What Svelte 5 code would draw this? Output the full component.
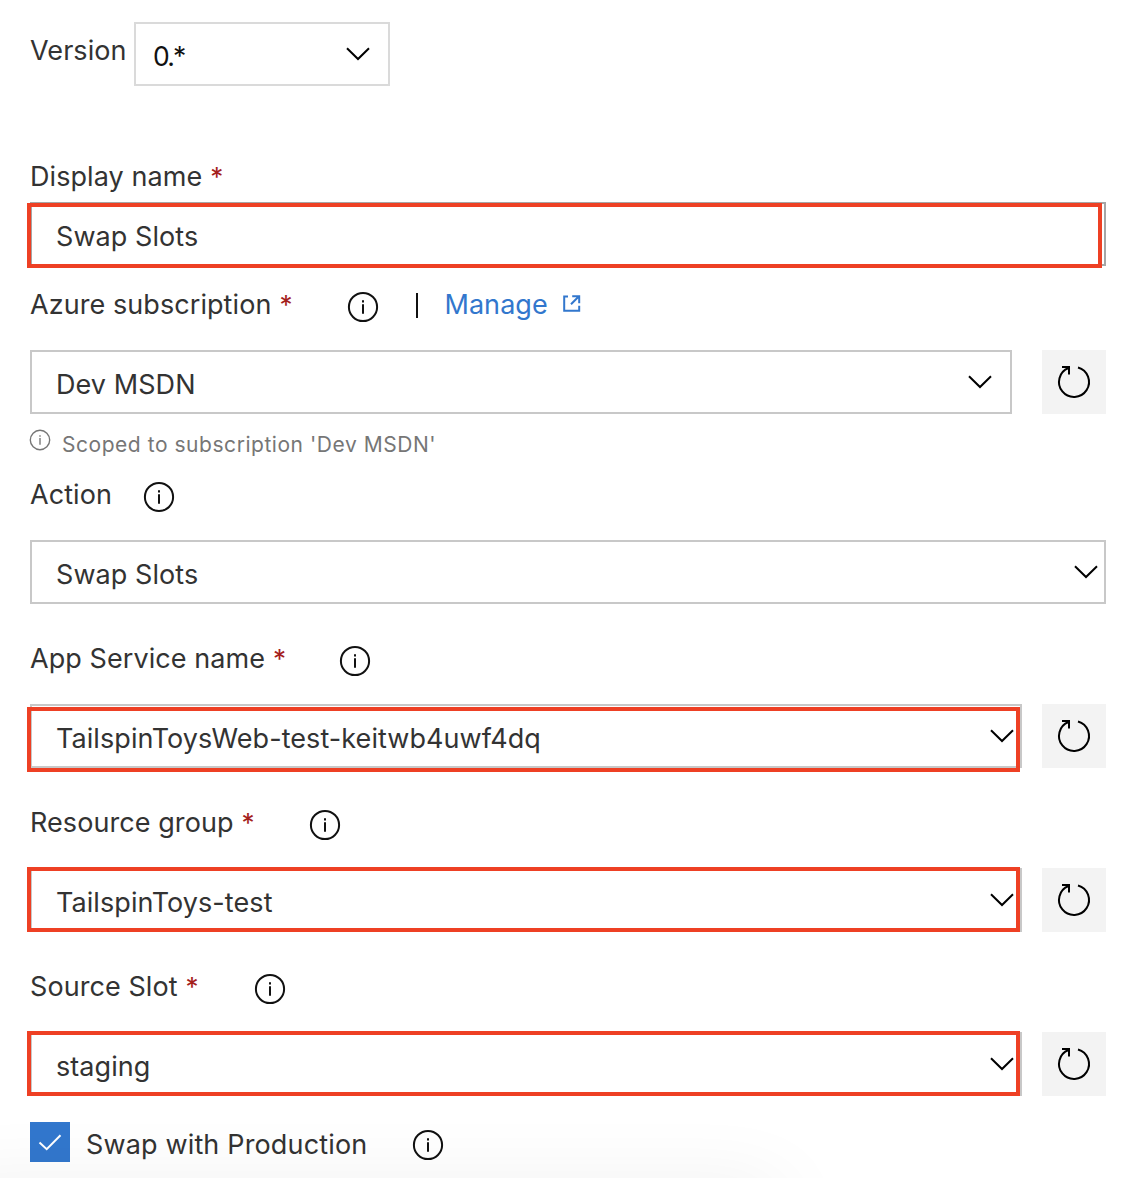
<script>
  const version = '0.*';
  const fields = [
    { id: 'name', label: 'Display name', value: 'Swap Slots', required: true, kind: 'text', mark: true },
    { id: 'subscription', label: 'Azure subscription', value: 'Dev MSDN', required: true, info: true, manage: true, refresh: true, hint: "Scoped to subscription 'Dev MSDN'", kind: 'select' },
    { id: 'action', label: 'Action', value: 'Swap Slots', info: true, kind: 'select' },
    { id: 'app', label: 'App Service name', value: 'TailspinToysWeb-test-keitwb4uwf4dq', required: true, info: true, refresh: true, kind: 'select', mark: true },
    { id: 'group', label: 'Resource group', value: 'TailspinToys-test', required: true, info: true, refresh: true, kind: 'select', mark: true },
    { id: 'slot', label: 'Source Slot', value: 'staging', required: true, info: true, refresh: true, kind: 'select', mark: true },
  ];
</script>

{#snippet info()}
  <svg class="info" viewBox="0 0 32 32" aria-hidden="true">
    <circle cx="16" cy="16" r="14.1" />
    <path d="M16 13.2V22.8M16 9.2v2.2" />
  </svg>
{/snippet}

{#snippet chevron()}
  <svg class="chevron" viewBox="0 0 24 14" aria-hidden="true"><path d="M1 1.2 12 12 23 1.2" /></svg>
{/snippet}

<main>
  <div class="version">
    <span class="version-label">Version</span>
    <div class="box version-box"><span>{version}</span>{@render chevron()}</div>
  </div>

  {#each fields as f (f.id)}
    <section class={f.id}>
      <div class="label">
        <span class="text">{f.label}</span>
        {#if f.required}<span class="star">*</span>{/if}
        {#if f.info}{@render info()}{/if}
        {#if f.manage}
          <i class="pipe"></i>
          <span class="link">Manage</span>
          <svg class="external" viewBox="0 0 18 18" aria-hidden="true">
            <path d="M5 1.6H1.2V15.8H16.2V10.8M8 9.2 15.7 1.5M9.2 1.2H16.2V8.2" />
          </svg>
        {/if}
      </div>
      <div class="row">
        <div class="box">
          <span class="value">{f.value}</span>
          {#if f.kind === 'select'}{@render chevron()}{/if}
          {#if f.mark}<i class="mark"></i>{/if}
        </div>
        {#if f.refresh}
          <div class="refresh">
            <svg viewBox="0 0 64 64" aria-hidden="true">
              <path d="M36 17.5A15 15 0 1 1 26.5 18" />
              <path d="M20 17H27V24.4" />
            </svg>
          </div>
        {/if}
      </div>
      {#if f.hint}
        <div class="hint">{@render info()}<span>{f.hint}</span></div>
      {/if}
    </section>
  {/each}

  <div class="production">
    <span class="check"><svg viewBox="0 0 40 40" aria-hidden="true"><path d="M9.5 20.5 16.7 27.2 30.5 13.2" /></svg></span>
    <span class="text">Swap with Production</span>
    {@render info()}
  </div>
  <i class="shade"></i>
</main>

<style>
  :global(body) { background: #fff; }
  main {
    position: relative;
    box-sizing: border-box;
    width: 1142px;
    height: 1178px;
    padding: 22px 36px 0 30px;
    overflow: hidden;
    font-family: Inter, "Liberation Sans", sans-serif;
    font-size: 27px;
    line-height: 34px;
    letter-spacing: .07px;
    color: #333;
    white-space: nowrap;
  }
  svg { display: block; flex: none; fill: none; stroke: #111; stroke-width: 2; }
  .version { display: flex; height: 64px; margin-bottom: 74px; }
  .version-label { width: 104px; padding-top: 12px; }
  .box {
    position: relative;
    box-sizing: border-box;
    display: flex;
    flex: 1;
    justify-content: space-between;
    height: 64px;
    padding: 16px 6px 0 24px;
    border: 2px solid #c8c8c8;
    background: #fff;
  }
  .version-box { flex: none; width: 256px; padding: 16px 18px 0 17px; border-color: #dadada; color: #111; font-size: 26.5px; line-height: 32px; letter-spacing: -1.8px; }
  .chevron { width: 24px; height: 14px; margin-top: 7px; stroke: #000; }
  .label { display: flex; height: 32px; margin-bottom: 30px; }
  .row { display: flex; gap: 20px; margin-bottom: 38px; }
  .star { width: 14px; margin-left: 8px; color: #a4201b; font-size: 26px; }
  .info { width: 32px; height: 32px; margin-top: 3px; }
  .label .star + .info { margin-left: 54px; }
  .app .label .star + .info { margin-left: 52.2px; }
  .group .label .star + .info { margin-left: 53.7px; }
  .name .label { margin-bottom: 10px; }
  .name .row { margin-bottom: 22px; }
  .name .box { border-color: #a6a6a6; }
  .subscription .row { gap: 30px; margin-bottom: 14px; }
  .subscription .box { padding-right: 18px; }
  .action .info { margin-left: 31px; }
  .mark { position: absolute; inset: 1px 0 -6px -5px; border: 4px solid #ee4024; }
  .name .mark { inset: -1px 2px -4px -5px; }
  .group .mark, .slot .mark { inset: -3px 0 -2px -5px; }
  .refresh { width: 64px; height: 64px; background: #f3f3f3; }
  .refresh svg { width: 64px; height: 64px; stroke: #000; }
  .pipe { width: 2px; height: 25px; margin: 5px 0 0 36.5px; background: #111; }
  .link { margin-left: 26.5px; color: #3277cd; }
  .external { width: 18px; height: 18px; margin: 7px 0 0 15px; stroke: #3277cd; }
  .hint { display: flex; height: 50px; color: #767676; font-size: 21px; line-height: 34px; letter-spacing: .54px; }
  .hint .info { width: 22px; height: 22px; margin: 1px 11px 0 -1px; stroke: #767676; }
  .production { display: flex; margin-top: -12px; }
  .check { width: 40px; height: 40px; margin-right: 16px; background: #3277cd; }
  .check svg { width: 40px; height: 40px; stroke: #fff; }
  .production .text { padding-top: 6px; letter-spacing: .15px; }
  .production .info { margin: 7px 0 0 45px; }
  .shade { position: absolute; left: -60px; bottom: -60px; width: 840px; height: 50px; box-shadow: 0 0 80px rgba(0, 0, 0, .08); pointer-events: none; }
</style>
